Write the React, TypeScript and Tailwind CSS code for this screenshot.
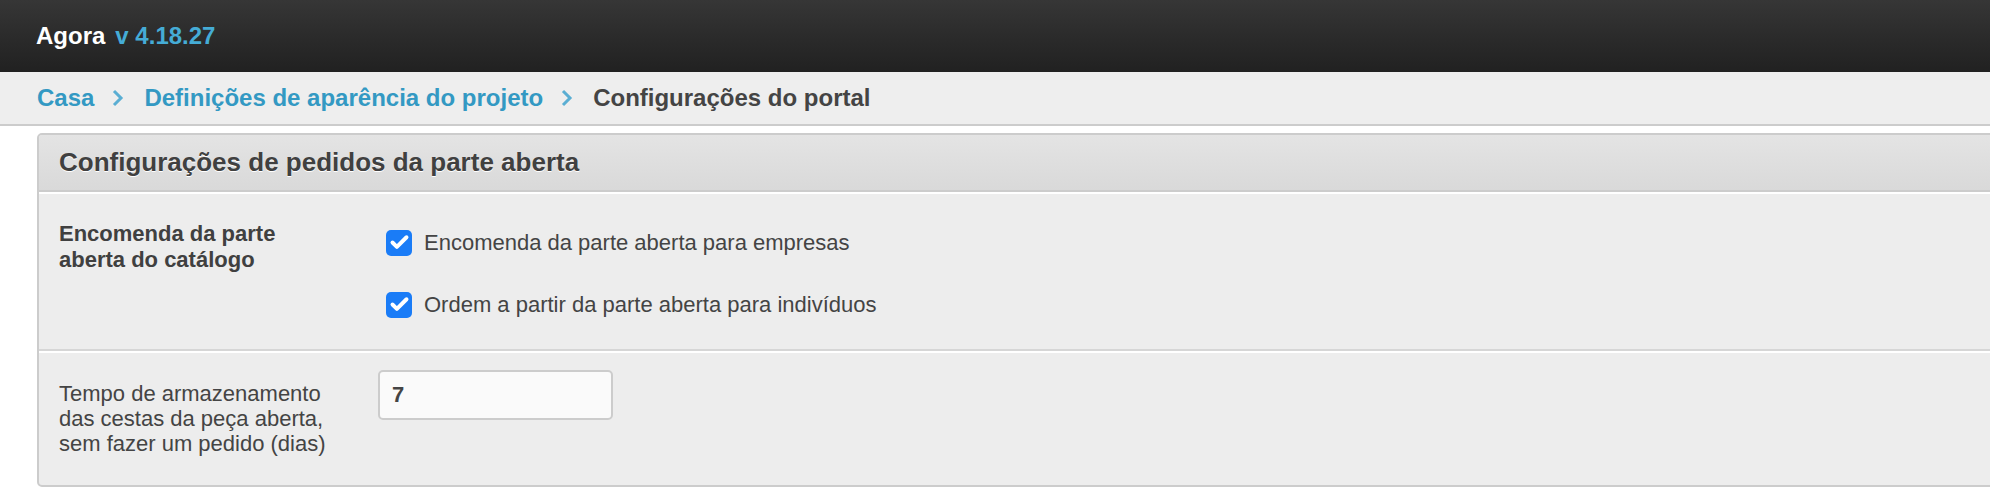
import { Check } from "lucide-react";

const font = { fontFamily: '"Liberation Sans", Arial, sans-serif' };

function Chevron() {
  return (
    <svg width="12" height="18" viewBox="0 0 12 18" className="ml-[18px] mr-[20px]">
      <path d="M2 2 L9 9 L2 16" fill="none" stroke="#5aaed3" strokeWidth="3" />
    </svg>
  );
}

function Checkbox({ label }: { label: string }) {
  return (
    <label className="flex items-center gap-3 text-[22px] leading-[33px] text-[#444]">
      <span className="w-[26px] h-[26px] rounded-[5px] bg-[#1a7cf7] flex items-center justify-center">
        <Check size={21} strokeWidth={4.5} color="white" />
      </span>
      {label}
    </label>
  );
}

export default function App() {
  return (
    <div className="min-h-[492px] bg-white overflow-hidden" style={font}>
      {/* top bar */}
      <div className="h-[72px] bg-gradient-to-b from-[#363636] to-[#212121] flex items-center pl-[36px] gap-[10px] font-bold text-[24px]">
        <span className="text-white">Agora</span>
        <span className="text-[#45acd6]">v 4.18.27</span>
      </div>

      {/* breadcrumbs */}
      <div className="h-[54px] bg-[#eeeeee] border-b-2 border-[#cccccc] flex items-center pl-[37px] font-bold text-[24px]">
        <a className="text-[#3399c3]">Casa</a>
        <Chevron />
        <a className="text-[#3399c3]">Definições de aparência do projeto</a>
        <Chevron />
        <span className="text-[#444]">Configurações do portal</span>
      </div>

      <div className="pt-[7px] pl-[37px] -mr-4">
        <div className="border-2 border-[#cccccc] rounded-[5px] overflow-hidden bg-[#ededed]">
          <div className="h-[57px] bg-gradient-to-b from-[#e4e4e4] to-[#d9d9d9] border-b-2 border-[#cccccc] flex items-center pl-[20px]">
            <h2 className="font-bold text-[26px] text-[#404040] [text-shadow:0_1px_0_#fff]">
              Configurações de pedidos da parte aberta
            </h2>
          </div>

          <div className="border-t-2 border-white grid grid-cols-[327px_1fr] pl-[20px] pt-[27px] pb-[28px] border-b-2 border-b-[#d6d6d6]">
            <div className="font-bold text-[22px] leading-[26px] text-[#404040] w-[275px]">
              Encomenda da parte aberta do catálogo
            </div>
            <div className="flex flex-col gap-[29px] pt-[5px]">
              <Checkbox label="Encomenda da parte aberta para empresas" />
              <Checkbox label="Ordem a partir da parte aberta para indivíduos" />
            </div>
          </div>

          <div className="border-t-2 border-white grid grid-cols-[319px_1fr] pl-[20px] pt-[17px] pb-[29px]">
            <div className="text-[22px] leading-[25px] text-[#444] w-[275px] pt-[11px]">
              Tempo de armazenamento das cestas da peça aberta, sem fazer um pedido (dias)
            </div>
            <div>
              <input
                defaultValue="7"
                className="w-[235px] h-[50px] bg-[#fafafa] border-2 border-[#cccccc] rounded-[5px] px-[12px] font-bold text-[22px] text-[#444] outline-none"
                style={font}
              />
            </div>
          </div>
        </div>
      </div>
    </div>
  );
}
